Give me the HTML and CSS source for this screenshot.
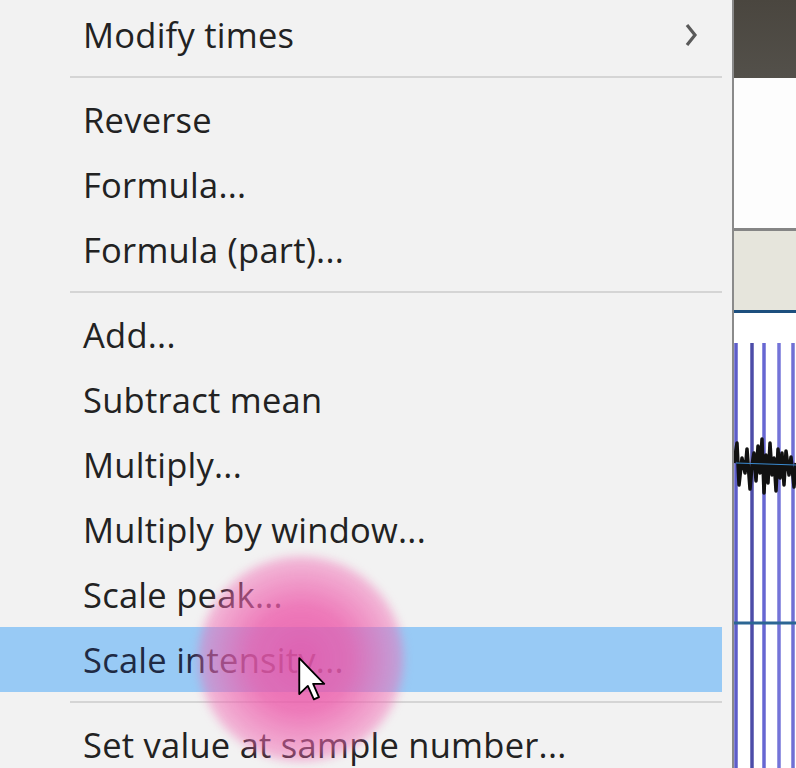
FILE: index.html
```html
<!DOCTYPE html>
<html>
<head>
<meta charset="utf-8">
<link rel="stylesheet" href="styles.css">
</head>
<body>
<div class="screen">
  <div class="menu">
    <div class="item"><span class="label">Modify times</span>
      <svg class="chev" width="16" height="26" viewBox="0 0 16 26"><path d="M4 3 L12 13 L4 23" fill="none" stroke="#5a5a5a" stroke-width="3.2"/></svg>
    </div>
    <div class="sep"></div>
    <div class="item"><span class="label">Reverse</span></div>
    <div class="item"><span class="label">Formula...</span></div>
    <div class="item"><span class="label">Formula (part)...</span></div>
    <div class="sep"></div>
    <div class="item"><span class="label">Add...</span></div>
    <div class="item"><span class="label">Subtract mean</span></div>
    <div class="item"><span class="label">Multiply...</span></div>
    <div class="item"><span class="label">Multiply by window...</span></div>
    <div class="item"><span class="label">Scale peak...</span></div>
    <div class="item active"><span class="label">Scale intensity...</span></div>
    <div class="sep"></div>
    <div class="item"><span class="label">Set value at sample number...</span></div>
    <div class="click-glow"></div>
    <svg class="cursor" width="30" height="44" viewBox="0 0 12 19"><path d="M0.5 0.5 L0.5 16 L4.2 12.5 L6.8 18.3 L9 17.3 L6.5 11.6 L11.3 11.6 Z" fill="#fff" stroke="#000" stroke-width="0.8" stroke-linejoin="round"/></svg>
  </div>
  <div class="panel">
    <div class="p-dark"></div>
    <div class="p-white"></div>
    <div class="p-grayline"></div>
    <div class="p-beige"></div>
    <div class="p-blueline"></div>
    <div class="p-signal">
      <svg width="62" height="455" viewBox="0 0 62 455">
        <g stroke-width="3.5">
          <line x1="2" y1="30" x2="2" y2="455" stroke="#5d5dc9"/>
          <line x1="18" y1="30" x2="18" y2="455" stroke="#4c4ca8"/>
          <line x1="30" y1="30" x2="30" y2="455" stroke="#6767d2"/>
          <line x1="45" y1="30" x2="45" y2="455" stroke="#7474d8"/>
          <line x1="59" y1="30" x2="59" y2="455" stroke="#7070d4"/>
        </g>
        <line x1="0" y1="310" x2="62" y2="310" stroke="#2c6694" stroke-width="3"/>
        <polyline points="0,150 3,130 5,172 8,145 11,160 13,136 16,176 18,152 20,140 22,168 24,133 26,160 28,126 30,180 32,142 34,170 36,130 38,162 40,145 42,178 44,136 46,165 48,140 50,172 52,138 55,162 57,144 60,174 62,150" fill="none" stroke="#111" stroke-width="3.5" stroke-linejoin="round"/>
        <line x1="2" y1="150" x2="62" y2="152" stroke="#3a8ad0" stroke-width="1"/>
      </svg>
    </div>
  </div>
</div>
</body>
</html>
```

FILE: styles.css
```css
html, body {
  margin: 0;
  padding: 0;
  background: #f2f2f2;
}
.screen {
  display: flex;
  width: 796px;
  height: 768px;
  overflow: hidden;
}
.menu {
  position: relative;
  width: 732px;
  flex: none;
  padding-top: 2px;
  box-sizing: border-box;
  background: #f2f2f2;
  font-family: "Open Sans", "Noto Sans", sans-serif;
  font-size: 34.5px;
  letter-spacing: 0.25px;
  color: #222;
}
.item {
  display: flex;
  align-items: center;
  justify-content: space-between;
  height: 65px;
  margin-right: 10px;
  padding-left: 83px;
  padding-right: 23px;
}
.item.active {
  background: #98caf5;
  color: #1f2a44;
}
.label {
  white-space: nowrap;
}
.chev {
  display: block;
}
.sep {
  height: 20px;
  display: flex;
  align-items: center;
  margin-left: 70px;
  margin-right: 10px;
}
.sep::before {
  content: "";
  flex: 1;
  height: 2px;
  background: #d5d5d5;
}
.click-glow {
  position: absolute;
  left: 198px;
  top: 556px;
  width: 206px;
  height: 206px;
  border-radius: 50%;
  filter: blur(5px);
  background: radial-gradient(circle, rgba(232, 84, 168, 0.88) 0%, rgba(236, 90, 170, 0.8) 35%, rgba(240, 104, 178, 0.55) 60%, rgba(244, 120, 186, 0.22) 82%, rgba(245, 130, 190, 0) 100%);
}
.cursor {
  position: absolute;
  left: 297px;
  top: 657px;
}
.panel {
  flex: 1;
  display: flex;
  flex-direction: column;
  border-left: 2px solid #8a8a8a;
  background: #fff;
}
.p-dark {
  height: 78px;
  background: linear-gradient(180deg, #4a463f, #53504a);
}
.p-white {
  height: 150px;
  background: #fdfdfd;
}
.p-grayline {
  height: 3px;
  background: #858585;
}
.p-beige {
  height: 79px;
  background: #e6e5dc;
}
.p-blueline {
  height: 3px;
  background: #1d4f7e;
}
.p-signal {
  flex: 1;
  background: #fff;
}
.p-signal svg {
  display: block;
}
```
